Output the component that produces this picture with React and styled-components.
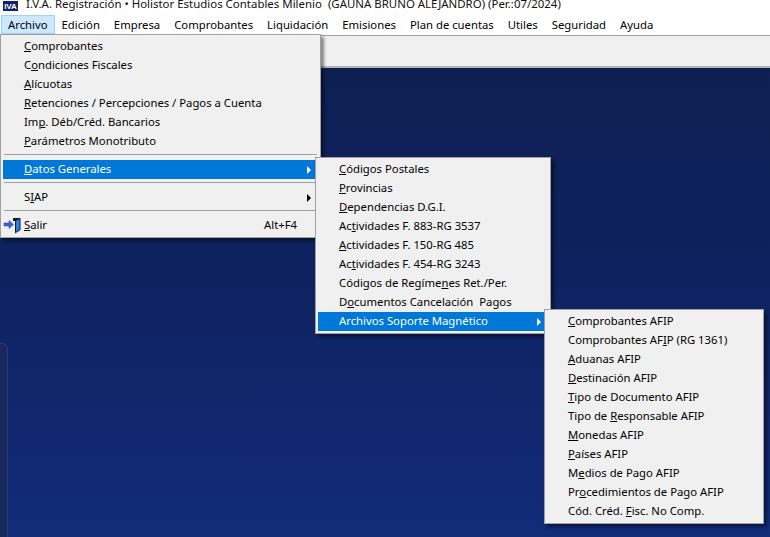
import React from 'react'
import styled, { createGlobalStyle } from 'styled-components'

const GlobalStyle = createGlobalStyle`
    html, body {
        margin: 0;
        padding: 0;
        height: 100%;
        overflow: hidden;
    }
    #root {
        height: 100%;
    }
`

const Window = styled.div`
    width: 770px;
    height: 537px;
    display: flex;
    flex-direction: column;
    position: relative;
    overflow: hidden;
    background-color: #ffffff;
    font-family: "Noto Sans", "Open Sans", sans-serif;
    font-size: 11.3px;
    color: #000000;
`

const TitleBar = styled.div`
    height: 14px;
    display: flex;
    align-items: flex-end;
    gap: 7px;
    padding-left: 3px;
    flex-shrink: 0;
    overflow: hidden;
`

const TitleText = styled.span`
    white-space: pre;
    line-height: 16px;
    margin-left: 1px;
    margin-bottom: 2px;
    font-size: 11.45px;
    color: #111111;
`

const TitleIcon = styled.div`
    align-self: flex-start;
    display: flex;
    margin-top: 1px;
`

const MenuBar = styled.div`
    height: 21px;
    display: flex;
    align-items: flex-start;
    padding-left: 1px;
    flex-shrink: 0;
`

const MenuBarItem = styled.div`
    height: 17px;
    line-height: 18px;
    margin-top: 1px;
    padding: 0 6px;
    box-sizing: content-box;
    border: 1px solid ${(props) => (props.$open ? '#99d1ff' : 'transparent')};
    background-color: ${(props) => (props.$open ? '#cce8ff' : 'transparent')};
    white-space: pre;
`

const Toolbar = styled.div`
    height: 30px;
    flex-shrink: 0;
    background-color: #f0f0f0;
    border-top: 1px solid #a0a0a0;
    border-bottom: 2px solid #b4b4b4;
`

const Desktop = styled.div`
    flex: 1;
    position: relative;
    background: linear-gradient(180deg, #0e1f52 0%, #0f2260 45%, #122c7a 100%);
`

const SidePanel = styled.div`
    position: absolute;
    left: -10px;
    top: 275px;
    bottom: -10px;
    width: 16px;
    border-radius: 6px;
    background-color: #18285c;
    border: 1px solid #2c3b6e;
`

const Menu = styled.div`
    position: absolute;
    left: ${(props) => props.$left}px;
    top: ${(props) => props.$top}px;
    width: ${(props) => props.$width}px;
    box-sizing: border-box;
    padding: 2px;
    display: flex;
    flex-direction: column;
    background-color: #f0f0f0;
    border: 1px solid #a0a0a0;
    box-shadow: 3px 3px 3px rgba(0, 0, 0, 0.45);
    z-index: ${(props) => props.$level};
`

const Row = styled.div`
    height: 19px;
    display: flex;
    align-items: center;
    position: relative;
    background-color: ${(props) => (props.$active ? '#0078d7' : 'transparent')};
    color: ${(props) => (props.$active ? '#ffffff' : '#000000')};
    white-space: pre;
`

const IconSlot = styled.div`
    width: 21px;
    height: 19px;
    flex-shrink: 0;
    display: flex;
`

const RowLabel = styled.span`
    flex: 1;
    line-height: 17px;
    padding-bottom: 2px;
`

const Shortcut = styled.span`
    line-height: 17px;
    padding-bottom: 2px;
    padding-right: 21px;
`

const Arrow = styled.div`
    width: 0;
    height: 0;
    margin-right: 7px;
    border-top: 4px solid transparent;
    border-bottom: 4px solid transparent;
    border-left: 4px solid ${(props) => (props.$active ? '#ffffff' : '#000000')};
`

const Separator = styled.div`
    height: 1px;
    margin: 3px 1px 5px;
    background-color: #a0a0a0;
`

// "&" marks the mnemonic letter, like the Win32 menu captions
function Caption({ text }) {
    const at = text.indexOf('&')
    if (at < 0) return text
    return (
        <>
            {text.slice(0, at)}
            <u>{text[at + 1]}</u>
            {text.slice(at + 2)}
        </>
    )
}

function IvaIcon() {
    return (
        <svg width="15" height="10" viewBox="0 0 15 10">
            <rect x="0" y="0" width="15" height="10" fill="#10206a" />
            <text x="7.5" y="8" textAnchor="middle" fontSize="8" fontWeight="700" fontFamily="Liberation Sans" fill="#ffffff">IVA</text>
        </svg>
    )
}

function ExitIcon() {
    return (
        <svg width="21" height="19" viewBox="0 0 21 19">
            <path d="M10 2 H17.5 V14 L12 17.5 V5 H10 Z" fill="#141c38" />
            <path d="M13 5 L16.5 3 V13.5 L13 15.7 Z" fill="#2f7fe0" />
            <path d="M1 7 H6 V4.5 L10.5 8.5 L6 12.5 V10 H1 Z" fill="#3a66d0" stroke="#1d3a94" strokeWidth="0.5" />
        </svg>
    )
}

const topMenus = ['Archivo', 'Edición', 'Empresa', 'Comprobantes', 'Liquidación', 'Emisiones', 'Plan de cuentas', 'Utiles', 'Seguridad', 'Ayuda']

const archivoItems = [
    { label: '&Comprobantes' },
    { label: 'C&ondiciones Fiscales' },
    { label: '&Alícuotas' },
    { label: '&Retenciones / Percepciones / Pagos a Cuenta' },
    { label: 'Im&p. Déb/Créd. Bancarios' },
    { label: '&Parámetros Monotributo' },
    { separator: true },
    { label: '&Datos Generales', sub: true, active: true },
    { separator: true },
    { label: 'S&IAP', sub: true },
    { separator: true },
    { label: '&Salir', shortcut: 'Alt+F4', icon: <ExitIcon /> },
]

const datosItems = [
    { label: '&Códigos Postales' },
    { label: '&Provincias' },
    { label: '&Dependencias D.G.I.' },
    { label: 'Ac&tividades F. 883-RG 3537' },
    { label: '&Actividades F. 150-RG 485' },
    { label: 'Ac&tividades F. 454-RG 3243' },
    { label: 'Códigos de Regíme&nes Ret./Per.' },
    { label: 'D&ocumentos Cancelación  Pagos' },
    { label: 'Archivos Soporte Magnético', sub: true, active: true },
]

const soporteItems = [
    { label: '&Comprobantes AFIP' },
    { label: 'Comprobantes AF&IP (RG 1361)' },
    { label: '&Aduanas AFIP' },
    { label: '&Destinación AFIP' },
    { label: '&Tipo de Documento AFIP' },
    { label: 'Tipo de &Responsable AFIP' },
    { label: '&Monedas AFIP' },
    { label: '&Países AFIP' },
    { label: 'M&edios de Pago AFIP' },
    { label: 'Pr&ocedimientos de Pago AFIP' },
    { label: 'Cód. Créd. &Fisc. No Comp.' },
]

function MenuItems({ items }) {
    return items.map((item, i) =>
        item.separator ? (
            <Separator key={i} />
        ) : (
            <Row key={i} $active={item.active}>
                <IconSlot>{item.icon}</IconSlot>
                <RowLabel><Caption text={item.label} /></RowLabel>
                {item.shortcut && <Shortcut>{item.shortcut}</Shortcut>}
                {item.sub && <Arrow $active={item.active} />}
            </Row>
        )
    )
}

export default function App() {
    return (
        <Window>
            <GlobalStyle />
            <TitleBar>
                <TitleIcon><IvaIcon /></TitleIcon>
                <TitleText>I.V.A. Registración • Holistor Estudios Contables Milenio  (GAUNA BRUNO ALEJANDRO) (Per.:07/2024)</TitleText>
            </TitleBar>
            <MenuBar>
                {topMenus.map((name, i) => (
                    <MenuBarItem key={name} $open={i === 0}>{name}</MenuBarItem>
                ))}
            </MenuBar>
            <Toolbar />
            <Desktop>
                <SidePanel />
            </Desktop>

            {/* cascading menus sit over the page */}
            <Menu $left={0} $top={34} $width={321} $level={1}>
                <MenuItems items={archivoItems} />
            </Menu>
            <Menu $left={315} $top={157} $width={236} $level={2}>
                <MenuItems items={datosItems} />
            </Menu>
            <Menu $left={544} $top={309} $width={220} $level={3}>
                <MenuItems items={soporteItems} />
            </Menu>
        </Window>
    )
}
